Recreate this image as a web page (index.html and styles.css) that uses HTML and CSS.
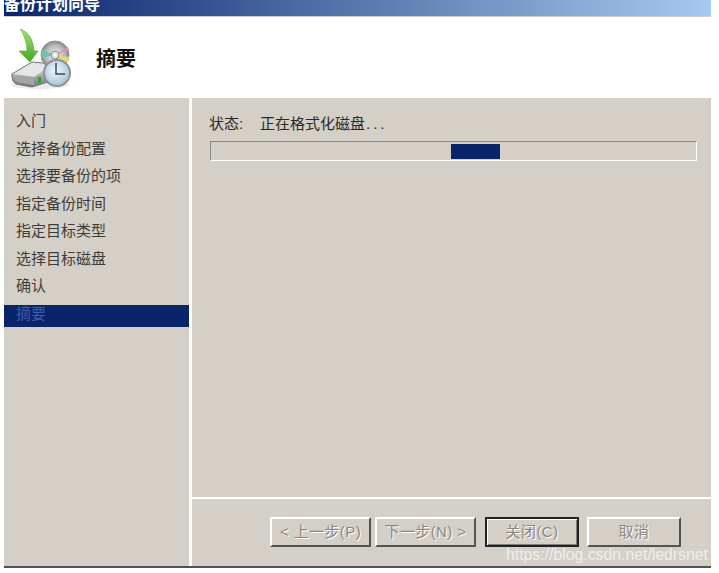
FILE: index.html
```html
<!DOCTYPE html>
<html lang="zh-CN">
<head>
    <meta charset="UTF-8">
    <meta name="viewport" content="width=device-width, initial-scale=1.0">
    <title>备份计划向导</title>
    <link rel="stylesheet" href="styles.css">
</head>
<body>
    <div class="wizard">
        <div class="titlebar"><span class="titlebar-text">备份计划向导</span></div>

        <div class="header">
            <svg class="header-icon" width="70" height="72" viewBox="0 0 70 72">
                <defs>
                    <linearGradient id="arrowFill" x1="0" y1="0" x2="0" y2="1">
                        <stop offset="0" stop-color="#a5df78"/>
                        <stop offset="1" stop-color="#45a822"/>
                    </linearGradient>
                    <linearGradient id="driveFill" x1="0" y1="0" x2="0" y2="1">
                        <stop offset="0" stop-color="#e9eaea"/>
                        <stop offset="1" stop-color="#74787a"/>
                    </linearGradient>
                    <radialGradient id="discFill" cx="0.5" cy="0.5" r="0.5">
                        <stop offset="0" stop-color="#f4f4f4"/>
                        <stop offset="0.7" stop-color="#b4b7b9"/>
                        <stop offset="1" stop-color="#85898c"/>
                    </radialGradient>
                    <radialGradient id="clockFill" cx="0.45" cy="0.4" r="0.6">
                        <stop offset="0" stop-color="#f2f7fb"/>
                        <stop offset="1" stop-color="#a4c4da"/>
                    </radialGradient>
                </defs>
                <ellipse cx="30" cy="63" rx="29" ry="4" fill="#ebebeb"/>
                <!-- drive -->
                <path d="M2 52 L22 40 L44 42 L44 58 L22 65 L6 62 Q2 60 2 55 Z" fill="url(#driveFill)" stroke="#6f7173" stroke-width="1"/>
                <path d="M3 52 L22 41 L42 43 L24 55 Z" fill="#e4e5e6"/>
                <path d="M5 55 L24 57 L24 63 L7 60 Z" fill="#a2a6a8"/>
                <rect x="28" y="55" width="3" height="6" fill="#2f9f28"/>
                <!-- disc -->
                <circle cx="45" cy="33" r="14" fill="url(#discFill)" stroke="#85898c" stroke-width="0.8"/>
                <path d="M45 33 L32 28 L31 36 Z" fill="#6fc3a8"/>
                <path d="M45 33 L59 28 L58 25 Z" fill="#e28fb3"/>
                <path d="M45 33 L59 35 L57 41 Z" fill="#e8d96c"/>
                <circle cx="45" cy="33" r="4" fill="#dfe1e2" stroke="#8a8d90" stroke-width="1"/>
                <circle cx="45" cy="33" r="1.5" fill="#ffffff"/>
                <!-- clock -->
                <circle cx="47" cy="51" r="13" fill="url(#clockFill)" stroke="#8d9295" stroke-width="2"/>
                <path d="M46 41 L46 52 L55 52" fill="none" stroke="#2f4c66" stroke-width="1.5"/>
                <!-- arrow -->
                <path d="M10.5 7 Q23 12 24 29 L28 29 L20 40 L9 29 L17 29 Q17 18 10.5 7 Z" fill="url(#arrowFill)" stroke="#55a830" stroke-width="0.6"/>
            </svg>
            <h1 class="header-title">摘要</h1>
        </div>

        <div class="body">
            <ul class="steps">
                <li class="step">入门</li>
                <li class="step">选择备份配置</li>
                <li class="step">选择要备份的项</li>
                <li class="step">指定备份时间</li>
                <li class="step">指定目标类型</li>
                <li class="step">选择目标磁盘</li>
                <li class="step">确认</li>
                <li class="step step-current">摘要</li>
            </ul>

            <div class="main">
                <div class="content">
                    <div class="status">
                        <span class="status-label">状态:</span>
                        <span>正在格式化磁盘<span class="dots">...</span></span>
                    </div>
                    <div class="progress"><div class="progress-fill"></div></div>
                </div>

                <div class="footer">
                    <button type="button" class="btn btn-prev" disabled>&lt; 上一步(P)</button>
                    <button type="button" class="btn btn-next" disabled>下一步(N) &gt;</button>
                    <button type="button" class="btn btn-close">关闭(C)</button>
                    <button type="button" class="btn btn-cancel">取消</button>
                </div>
            </div>
        </div>
    </div>
    <div class="watermark">https://blog.csdn.net/ledrsnet</div>
</body>
</html>
```

FILE: styles.css
```css
html, body {
    margin: 0;
    padding: 0;
    background-color: #fff;
}
body {
    width: 719px;
    height: 573px;
    overflow: hidden;
    position: relative;
    font-family: "Liberation Sans", "Noto Sans CJK SC", sans-serif;
    font-size: 15px;
    color: #3e3c38;
}
.wizard {
    width: 707px;
    height: 566px;
    margin-left: 4px;
    display: flex;
    flex-direction: column;
    border-bottom: 2px solid #55534f;
}
.titlebar {
    height: 16px;
    flex: none;
    overflow: hidden;
    background: linear-gradient(to right, #0a246a, #a6caf0);
    border-bottom: 1px solid #d4d0c8;
}
.titlebar-text {
    display: block;
    margin-top: -5px;
    font-size: 16px;
    line-height: 20px;
    font-weight: bold;
    color: #fff;
}
.header {
    height: 81px;
    flex: none;
    display: flex;
    align-items: center;
    background-color: #fff;
}
.header-icon {
    margin-left: 6px;
    flex: none;
}
.header-title {
    margin: 0 0 0 16px;
    font-size: 20px;
    font-weight: bold;
    color: #111;
}
.body {
    flex: 1;
    display: flex;
    min-height: 0;
}
.steps {
    width: 185px;
    flex: none;
    margin: 0;
    padding: 9px 0 0;
    list-style: none;
    background-color: #d4d0c8;
    border-right: 3px solid #fff;
}
.step {
    height: 27.5px;
    line-height: 27.5px;
    padding-left: 12px;
}
.step-current {
    height: 22px;
    line-height: 17px;
    margin-top: 5px;
    background-color: #0a246a;
    color: #3a5cab;
}
.main {
    flex: 1;
    display: flex;
    flex-direction: column;
    background-color: #d4d0c8;
}
.content {
    flex: 1;
    padding: 15px 14px 0 17px;
}
.status {
    display: flex;
    height: 22px;
    line-height: 22px;
    padding-bottom: 6px;
    color: #2a2825;
}
.status-label {
    width: 51px;
}
.dots {
    letter-spacing: 3px;
    margin-left: 1px;
}
.progress {
    position: relative;
    height: 18px;
    margin-left: 1px;
    border: 1px solid;
    border-color: #8a8884 #fff #fff #8a8884;
}
.progress-fill {
    position: absolute;
    left: 240px;
    top: 2px;
    width: 49px;
    height: 15px;
    background-color: #0a246a;
}
.footer {
    height: 69px;
    flex: none;
    display: flex;
    align-items: flex-start;
    padding-top: 18px;
    padding-left: 78px;
    border-top: 2px solid #fff;
    box-sizing: border-box;
}
.btn {
    width: 101px;
    height: 30px;
    padding: 0 0 3px;
    font-family: inherit;
    font-size: 15px;
    letter-spacing: 0.4px;
    background-color: #d4d0c8;
    color: #8a8782;
    text-shadow: 1px 1px 0 #fff;
    border: 2px solid;
    border-color: #fff #55534f #55534f #fff;
}
.btn-next {
    margin-left: 4px;
}
.btn-close {
    width: 94px;
    margin-left: 9px;
    border-color: #222;
    box-shadow: inset 1px 1px 0 #fff, inset -1px -1px 0 #808080;
}
.btn-cancel {
    width: 94px;
    margin-left: 8px;
}
.watermark {
    position: absolute;
    left: 506px;
    top: 546px;
    font-size: 15.8px;
    line-height: 18px;
    color: rgba(255, 255, 255, 0.65);
}
```
